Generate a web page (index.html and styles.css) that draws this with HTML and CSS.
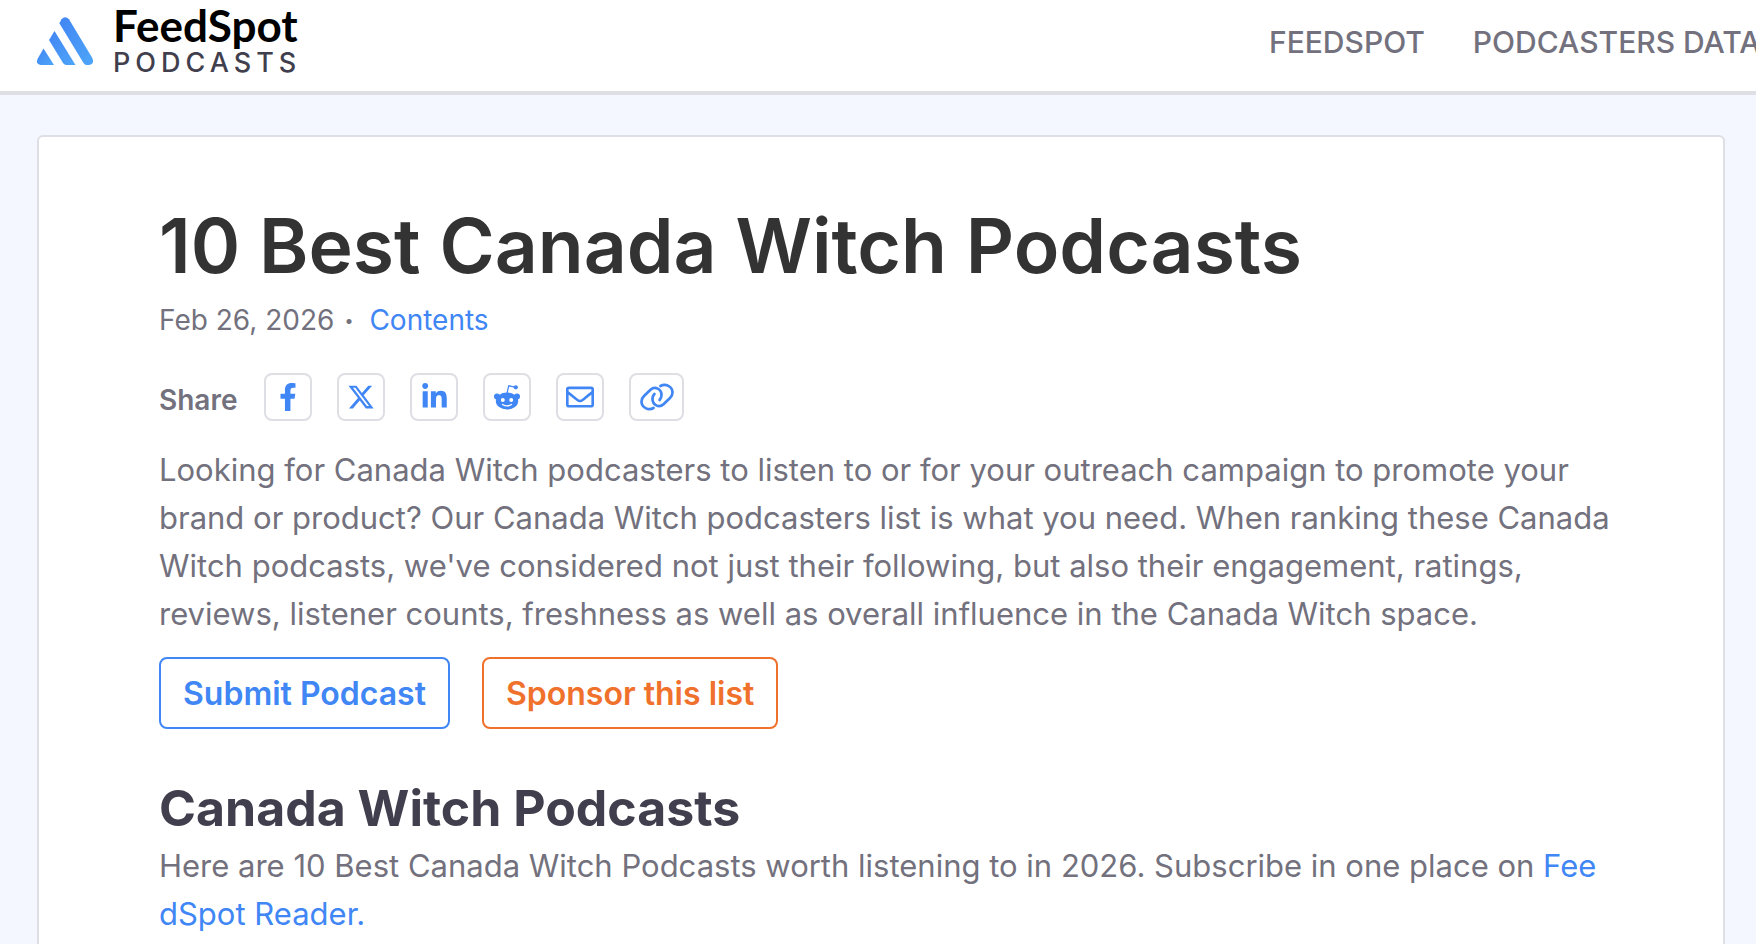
FILE: index.html
```html
<!DOCTYPE html>
<html lang="en">
<head>
    <meta charset="UTF-8">
    <meta name="viewport" content="width=device-width, initial-scale=1.0">
    <title>10 Best Canada Witch Podcasts</title>
    <link rel="stylesheet" href="styles.css">
</head>
<body>
    <header class="header">
        <a class="logo" href="#">
            <svg class="logo-mark" viewBox="0 0 56 48" aria-hidden="true">
                <defs>
                    <linearGradient id="logoFill" x1="0" y1="0" x2="1" y2="1">
                        <stop offset="0" stop-color="#4285f4"/>
                        <stop offset="1" stop-color="#4da5f8"/>
                    </linearGradient>
                </defs>
                <g fill="url(#logoFill)">
                    <path d="M22.500 6 24.500 2.300Q28 -2 32 2.300L55 40.500Q58 47 52 48H49Q47.500 47.500 46.500 46L22.500 6.500Z"/>
                    <path d="M17.500 14 38.500 48H29Q27 47.500 26 46L12 23Z"/>
                    <path d="M6.500 31.500 17 48H3.500Q-1.500 47 .5 42Z"/>
                </g>
            </svg>
            <span class="logo-text">
                <span class="logo-name">FeedSpot</span>
                <span class="logo-sub">PODCASTS</span>
            </span>
        </a>
        <nav class="nav">
            <a href="#">FEEDSPOT</a>
            <a href="#">PODCASTERS DATABASE</a>
        </nav>
    </header>

    <main class="card">
        <h1>10 Best Canada Witch Podcasts</h1>
        <div class="meta">
            <span>Feb 26, 2026</span>
            <span class="dot">•</span>
            <a href="#contents">Contents</a>
        </div>

        <div class="share">
            <span class="share-label">Share</span>
            <a class="share-btn" href="#" aria-label="Share on Facebook">
                <svg width="18" height="28" viewBox="0 0 320 512" aria-hidden="true"><path fill="currentColor" d="M279 288l14.200-92.700h-88.900v-60.100c0-25.400 12.400-50.100 52.200-50.100h40.400V6.300S260.400 0 225.400 0c-73.200 0-121.100 44.400-121.100 124.700v70.600H22.900V288h81.400v224h100.200V288z"/></svg>
            </a>
            <a class="share-btn" href="#" aria-label="Share on X">
                <svg width="28" height="28" viewBox="0 0 512 512" aria-hidden="true"><path fill="currentColor" d="M389.200 48h70.600L305.600 224.200 487 464H345L233.700 318.600 106.500 464H35.800l164.900-188.500L26.800 48h145.600l100.500 132.900L389.200 48zm-24.800 373.800h39.100L151.100 88h-42l255.300 333.800z"/></svg>
            </a>
            <a class="share-btn" href="#" aria-label="Share on LinkedIn">
                <svg width="25" height="28" viewBox="0 0 448 512" aria-hidden="true"><path fill="currentColor" d="M100.300 448H7.400V148.900h92.900zM53.800 108.100C24.100 108.100 0 83.500 0 53.800a53.800 53.800 0 0 1 107.600 0c0 29.700-24.100 54.300-53.800 54.300zM447.900 448h-92.700V302.400c0-34.700-.7-79.200-48.300-79.200-48.300 0-55.700 37.700-55.700 76.700V448h-92.800V148.900h89.100v40.800h1.300c12.400-23.500 42.700-48.300 87.900-48.300 94 0 111.300 61.900 111.300 142.300V448z"/></svg>
            </a>
            <a class="share-btn" href="#" aria-label="Share on Reddit">
                <svg width="26" height="26" viewBox="0 0 26 26" aria-hidden="true">
                    <path d="M13 9.500 14.700 1.800 21 3.200" fill="none" stroke="currentColor" stroke-width="1.200"/>
                    <circle cx="21.800" cy="3.300" r="2.100" fill="currentColor"/>
                    <circle cx="3" cy="12.500" r="3" fill="currentColor"/>
                    <circle cx="23" cy="12.500" r="3" fill="currentColor"/>
                    <ellipse cx="13" cy="17" rx="11.200" ry="8.500" fill="currentColor"/>
                    <circle cx="8.800" cy="16" r="2" fill="#fff"/>
                    <circle cx="17.200" cy="16" r="2" fill="#fff"/>
                    <path d="M8.500 20.500q4.500 2.800 9 0" fill="none" stroke="#fff" stroke-width="1.300" stroke-linecap="round"/>
                </svg>
            </a>
            <a class="share-btn" href="#" aria-label="Share by email">
                <svg width="28" height="28" viewBox="0 0 512 512" aria-hidden="true"><path fill="currentColor" d="M464 64H48C21.500 64 0 85.500 0 112v288c0 26.500 21.500 48 48 48h416c26.500 0 48-21.500 48-48V112c0-26.500-21.500-48-48-48zm0 48v40.800c-22.400 18.300-58.200 46.700-134.600 106.500-16.800 13.200-50.200 45.100-73.400 44.700-23.200.4-56.600-31.500-73.400-44.700C106.200 199.500 70.400 171.100 48 152.800V112h416zM48 400V214.400c22.900 18.300 55.400 43.900 104.900 82.600 21.900 17.200 60.100 55.200 103.100 55 42.700.2 80.500-37.200 103.100-54.900 49.500-38.800 82-64.400 104.900-82.700V400H48z"/></svg>
            </a>
            <a class="share-btn share-link" href="#" aria-label="Copy link">
                <svg width="34" height="28" viewBox="0 0 34 28" fill="none" stroke="currentColor" stroke-width="2.700" stroke-linecap="round" aria-hidden="true">
                    <path d="M13.500 25C8.500 28 1.500 24.500 1.500 18.500Q1.500 15.500 4 13L10.500 6.800C15 2.800 21.500 6 21.500 12Q21.500 15 19.600 17"/>
                    <path d="M20.500 3C25.500 0 32.500 3.500 32.500 9.500Q32.500 12.500 30 15L23.500 21.200C19 25.200 12.500 22 12.500 16Q12.500 13 14.400 11"/>
                </svg>
            </a>
        </div>

        <p>
            Looking for Canada Witch podcasters to listen to or for your outreach campaign to promote your<br>
            brand or product? Our Canada Witch podcasters list is what you need. When ranking these Canada<br>
            Witch podcasts, we've considered not just their following, but also their engagement, ratings,<br>
            reviews, listener counts, freshness as well as overall influence in the Canada Witch space.
        </p>

        <div class="actions">
            <button class="btn btn-submit" type="button">Submit Podcast</button>
            <button class="btn btn-sponsor" type="button">Sponsor this list</button>
        </div>

        <h2 id="contents">Canada Witch Podcasts</h2>
        <p>
            Here are 10 Best Canada Witch Podcasts worth listening to in 2026. Subscribe in one place on <a href="#">Fee<br>dSpot Reader.</a>
        </p>
    </main>
</body>
</html>
```
FILE: styles.css
```css
:root {
    --blue: #4086f4;
    --orange: #f0712c;
    --text: #72717d;
    --heading: #413f4d;
    --border: #dedfe4;
    --bg: #f4f7ff;
}

* {
    box-sizing: border-box;
    margin: 0;
    padding: 0;
}

body {
    display: flex;
    flex-direction: column;
    font-family: Inter, "Liberation Sans", sans-serif;
    font-size: 31px;
    line-height: 48px;
    color: var(--text);
    background: var(--bg);
    min-height: 100vh;
}

a {
    color: var(--blue);
    text-decoration: none;
}

.header {
    display: flex;
    align-items: flex-start;
    justify-content: space-between;
    height: 95px;
    padding-left: 37px;
    background: #fff;
    border-bottom: 4px solid var(--border);
    overflow: hidden;
}

.logo {
    display: flex;
    gap: 20px;
    padding-top: 2px;
}

.logo-mark {
    width: 56px;
    height: 48px;
    margin-top: 15px;
}

.logo-text {
    display: flex;
    flex-direction: column;
}

.logo-name {
    font-family: Lato, sans-serif;
    font-size: 44px;
    font-weight: 700;
    line-height: 46px;
    color: #000;
}

.logo-sub {
    font-size: 27px;
    font-weight: 500;
    letter-spacing: 5px;
    line-height: 30px;
    color: var(--heading);
}

/* the last link runs off the right edge */
.nav {
    display: flex;
    flex: none;
    gap: 48px;
    width: 487px;
    padding-top: 18px;
    white-space: nowrap;
}

.nav a {
    font-size: 30px;
    font-weight: 500;
    color: var(--text);
}

.card {
    flex: 1;
    margin: 40px 31px 0 37px;
    padding: 61px 120px 0;
    background: #fff;
    border: 2px solid var(--border);
    border-bottom: 0;
    border-radius: 6px 6px 0 0;
    white-space: nowrap;
}

h1 {
    font-size: 75px;
    font-weight: 600;
    line-height: 96px;
    color: #333;
}

.meta {
    display: flex;
    gap: 10px;
    margin-top: 2px;
    font-size: 28px;
}

.dot {
    margin-right: 6px;
    font-size: 16px;
}

.share {
    display: flex;
    align-items: center;
    gap: 25px;
    margin: 29px 0 25px;
}

.share-label {
    min-width: 80px;
    padding-top: 6px;
    font-size: 28px;
    font-weight: 600;
    line-height: 42px;
}

.share-btn {
    display: flex;
    align-items: center;
    justify-content: center;
    width: 48px;
    height: 48px;
    border: 2px solid var(--border);
    border-radius: 8px;
}

.share-link {
    width: 55px;
}

.actions {
    display: flex;
    gap: 32px;
    margin: 19px 0 48px;
}

.btn {
    height: 72px;
    padding: 2px 22px 0;
    font: inherit;
    font-size: 32px;
    font-weight: 600;
    background: #fff;
    border: 2px solid currentColor;
    border-radius: 8px;
}

.btn-submit {
    color: var(--blue);
}

.btn-sponsor {
    color: var(--orange);
}

h2 {
    margin-bottom: 3px;
    font-size: 50px;
    font-weight: 700;
    line-height: 62px;
    color: var(--heading);
}
```
